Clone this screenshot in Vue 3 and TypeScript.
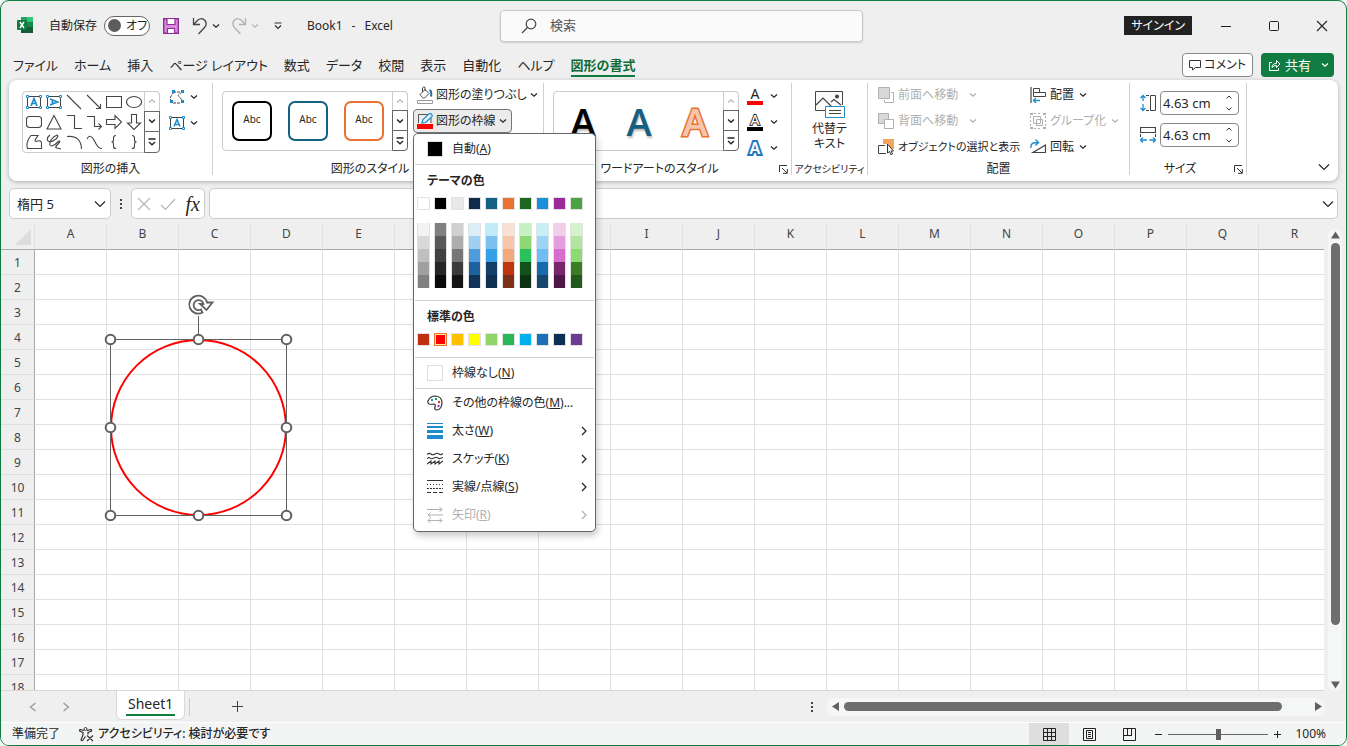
<script setup lang="ts">
import { h, ref } from 'vue'

const Chevron = (props: { wide?: boolean }) =>
  props.wide
    ? h('svg', { width: 12, height: 8, viewBox: '0 0 12 8', class: 'chev' }, [h('path', { d: 'M1 1.5 6 6.5 11 1.5', fill: 'none', stroke: 'currentColor', 'stroke-width': 1.2 })])
    : h('svg', { width: 8, height: 6, viewBox: '0 0 8 6', class: 'chev' }, [h('path', { d: 'M1 1.5 4 4.3 7 1.5', fill: 'none', stroke: 'currentColor', 'stroke-width': 1.2 })])
Chevron.props = { wide: Boolean }

const GalleryScroll = () =>
  h('div', { class: 'gscroll' }, [
    h('button', { class: 'off', 'aria-label': '上へ' }, [h('svg', { width: 8, height: 6, viewBox: '0 0 8 6' }, [h('path', { d: 'M1 4.5 4 1.7 7 4.5', fill: 'none', stroke: '#b5b5b5', 'stroke-width': 1.2 })])]),
    h('button', { 'aria-label': '下へ' }, [h('svg', { width: 8, height: 6, viewBox: '0 0 8 6' }, [h('path', { d: 'M1 1.5 4 4.3 7 1.5', fill: 'none', stroke: '#222', 'stroke-width': 1.4 })])]),
    h('button', { 'aria-label': 'その他' }, [h('svg', { width: 8, height: 8, viewBox: '0 0 8 8' }, [h('path', { d: 'M0.5 1H7.5M1 4 4 6.8 7 4', fill: 'none', stroke: '#222', 'stroke-width': 1.3 })])])
  ])

const Launcher = () =>
  h('button', { class: 'launcher', 'aria-label': '詳細設定' }, [
    h('svg', { width: 9, height: 9, viewBox: '0 0 9 9' }, [h('path', { d: 'M0.5 7V0.5H8M3 3 8 8M8.3 4V8.3H4', fill: 'none', stroke: '#333' })])
  ])

const tabs = ['ファイル', 'ホーム', '挿入', 'ページ レイアウト', '数式', 'データ', '校閲', '表示', '自動化', 'ヘルプ', '図形の書式']
const activeTab = ref('図形の書式')

const shapes: string[] = [
  'M1 1 15 15', 'M1 1 14.5 14.5M14.5 10V14.5H10', 'M.5 2.5H15.5V13.5H.5Z', 'M8 2.5a7.5 5.5 0 1 1 0 11a7.5 5.5 0 1 1 0-11Z',
  'M3.5 2.5H12.5Q15.5 2.5 15.5 5.5V10.5Q15.5 13.5 12.5 13.5H3.5Q.5 13.5 .5 10.5V5.5Q.5 2.5 3.5 2.5Z', 'M8 1.5 15 15H1Z', 'M1 1.5H8.5V14.5H16', 'M1 2.5H8.5V12.5H15M12.5 9.5 15.5 12.5 12.5 15.5', 'M.5 5.5H9V1.5L15.5 8 9 14.5V10.5H.5Z', 'M5.500 .5H10.5V9H14.5L8 15.5 1.5 9H5.500Z',
  'M5 1.5H12L9 6Q9 8 11.500 7Q15 6 15.500 9V14.500H1.500Q-.5 8 5 1.500Z', 'M4 1Q0 4 2 7Q5 9 10 5Q13 2 11 1Q8 2 5 6Q2 12 6 12Q9 11 13 7Q15 7 12 10Q8 14 11 14L15 15', 'M1 2.500Q15 1 15.500 15', 'M1 5Q4-1 8 6Q12 15 16 14.500', 'M10 1.500Q7.500 1.500 7.500 4V6Q7.500 8 5.500 8Q7.500 8 7.500 10V12.500Q7.500 14.500 10 14.500', 'M6 1.500Q8.500 1.500 8.500 4V6Q8.500 8 10.500 8Q8.500 8 8.500 10V12.500Q8.500 14.500 6 14.500'
]

const theme = ['#ffffff', '#000000', '#e8e8e8', '#102a4c', '#156082', '#e97132', '#1c661f', '#1a90d8', '#992b99', '#4ba344']
const shades = [
  ['#f2f2f2', '#d9d9d9', '#bfbfbf', '#a0a0a0', '#808080'],
  ['#808080', '#595959', '#404040', '#262626', '#0a0a0a'],
  ['#d0d0d0', '#aeaeae', '#767676', '#3b3b3b', '#141414'],
  ['#dceef5', '#9fd0f0', '#4f9cdc', '#1d619e', '#123358'],
  ['#c1ebf8', '#7cc0f0', '#35a0e8', '#12406a', '#103050'],
  ['#fbe0d4', '#f6c5ac', '#f2aa7c', '#bf3510', '#7d3018'],
  ['#c8f0c4', '#8cd674', '#2cc05c', '#12501c', '#0c3414'],
  ['#c8eef8', '#9ad4f6', '#70bcf4', '#156aac', '#14466e'],
  ['#f2cfe8', '#e59edd', '#d86dcd', '#78266c', '#501648'],
  ['#d4f2cc', '#b3e5a1', '#8ed973', '#3b7d23', '#205a1c']
]
const standard = ['#c03010', '#ff0000', '#ffc000', '#ffff00', '#90d46c', '#28b858', '#00b0f0', '#1c70b8', '#0f2e54', '#6c3c94']
const picked = ref('#ff0000')

const columns = 'ABCDEFGHIJKLMNOPQR'.split('')
const rows = Array.from({ length: 18 }, (_, i) => i + 1)
const styles = ['black', 'blue', 'orange']

const autosave = ref(false)
const query = ref('')
const cellName = ref('楕円 5')
const formula = ref('')
const shapeHeight = ref('4.63 cm')
const shapeWidth = ref('4.63 cm')
const zoom = ref(100)
</script>

<template>
  <div class="window">
    <header class="titlebar">
      <div class="quick">
        <svg class="logo" width="17" height="17" viewBox="0 0 17 17">
          <path d="M4 0H16V16H4Z" fill="#33c481" /><path d="M4 0H10V6H4Z" fill="#21a366" /><path d="M4 5H16V11H4Z" fill="#178849" /><path d="M4 10H16V16H4Z" fill="#185c37" />
          <rect x="0" y="3" width="10" height="10" rx="1" fill="#107c41" /><path d="M3 5 7 11M7 5 3 11" stroke="#fff" stroke-width="1.5" />
        </svg>
        <label class="autosave">自動保存
          <input v-model="autosave" type="checkbox" role="switch"><span class="switch"><i></i>オフ</span>
        </label>
        <button class="save" aria-label="保存">
          <svg width="16" height="16" viewBox="0 0 16 16"><path d="M.7.700H15.300V15.300H.7Z" fill="#d58ed9" stroke="#922b97" stroke-width="1.400" /><path d="M4 1V6.500H12V1M4.500 15V10.500H11.500V15" fill="#fff" stroke="#922b97" stroke-width="1.200" /></svg>
        </button>
        <button class="undo" aria-label="元に戻す">
          <svg width="16" height="18" viewBox="0 0 16 18"><path d="M1.500 1V7.500H8M1.500 7.500 6 3Q10 0 13 3.500Q15.500 7 12.500 10.500L6.500 17" fill="none" stroke="#444" stroke-width="1.300" /></svg>
          <Chevron />
        </button>
        <button class="undo dim" aria-label="やり直し">
          <svg width="16" height="18" viewBox="0 0 16 18"><path d="M14.500 1V7.500H8M14.500 7.500 10 3Q6 0 3 3.500Q.5 7 3.500 10.500L9.500 17" fill="none" stroke="#b0b0b0" stroke-width="1.300" /></svg>
          <Chevron />
        </button>
        <button class="customize" aria-label="ツール バーのカスタマイズ">
          <svg width="8" height="8" viewBox="0 0 8 8"><path d="M.5 1H7.500M1 3.500 4 6.500 7 3.500" fill="none" stroke="#333" stroke-width="1.200" /></svg>
        </button>
        <div class="doc"><span>Book1</span><span>-</span><span>Excel</span></div>
      </div>
      <label class="search">
        <svg width="16" height="16" viewBox="0 0 16 16"><circle cx="10" cy="6" r="4.800" fill="none" stroke="#444" stroke-width="1.200" /><path d="M6.500 9.500 1 15" stroke="#444" stroke-width="1.200" /></svg>
        <input v-model="query" type="search" placeholder="検索" aria-label="検索">
      </label>
      <div class="winctl">
        <button class="signin">サインイン</button>
        <button class="wc" aria-label="最小化"><svg width="12" height="12" viewBox="0 0 12 12"><path d="M1 6.500H11" stroke="#222" /></svg></button>
        <button class="wc" aria-label="最大化"><svg width="12" height="12" viewBox="0 0 12 12"><rect x="1.500" y="1.500" width="9" height="9" rx="1" fill="none" stroke="#222" /></svg></button>
        <button class="wc" aria-label="閉じる"><svg width="12" height="12" viewBox="0 0 12 12"><path d="M1 1 11 11M11 1 1 11" stroke="#222" stroke-width="1.100" /></svg></button>
      </div>
    </header>

    <nav class="tabs">
      <button v-for="t in tabs" :key="t" :class="['tab', { active: t === activeTab }]" @click="activeTab = t">{{ t }}</button>
      <span class="fill"></span>
      <button class="comment">
        <svg width="12" height="12" viewBox="0 0 12 12"><path d="M.5 1.500H11.500V8.500H6.500L3.500 11V8.500H.5Z" fill="none" stroke="#333" /></svg>コメント
      </button>
      <button class="share">
        <svg width="13" height="13" viewBox="0 0 13 13"><path d="M4 3.500H1.500V11.500H10.500V9M4 8.500Q4 4.500 8.500 4.500V1.500L12 5 8.500 8.500V6.500Q5.500 6.500 4 8.500Z" fill="none" stroke="#fff" /></svg>共有
        <Chevron />
      </button>
    </nav>

    <section class="ribbon">
      <div class="group g-insert">
        <div class="body">
          <div class="gallery shapes-gallery">
            <div class="shapes">
              <svg v-for="n in 2" :key="'t' + n" width="16" height="16" viewBox="0 0 16 16">
                <path d="M1.500 2.500H14.500V13.500H1.500Z" fill="none" stroke="#444" />
                <path d="M5 12 8 4.500 11 12M6 9.500H10" fill="none" stroke="#1e8bcd" stroke-width="1.700" :transform="n === 2 ? 'rotate(90 8 8)' : undefined" />
                <path d="M.5 1.500h2v2h-2zM13.500 1.500h2v2h-2zM.5 12.500h2v2h-2zM13.500 12.500h2v2h-2z" fill="#fff" stroke="#1e8bcd" />
              </svg>
              <svg v-for="(d, i) in shapes" :key="i" width="16" height="16" viewBox="0 0 16 16"><path :d="d" fill="none" stroke="#444" stroke-width="1.100" /></svg>
            </div>
            <GalleryScroll />
          </div>
          <div class="stack">
            <button aria-label="図形の編集">
              <svg width="16" height="16" viewBox="0 0 16 16"><path d="M5 3 1.500 8V13M4 3H13M13 3 9 6.500 14 12M4 14H12" fill="none" stroke="#444" stroke-dasharray="3 1" /><path d="M3 1h3v3h-3zM12 1h3v3h-3zM1 11h3v3h-3zM12 11h3v3h-3z" fill="#1e8bcd" /></svg><Chevron />
            </button>
            <button aria-label="テキスト ボックス">
              <svg width="16" height="16" viewBox="0 0 16 16"><path d="M1.500 2.500H14.500V13.500H1.500Z" fill="none" stroke="#444" /><path d="M5 11.500 8 4.500 11 11.500M6 9.500H10" fill="none" stroke="#1e8bcd" stroke-width="1.500" /><path d="M.5 1.500h2v2h-2zM13.500 1.500h2v2h-2zM.5 12.500h2v2h-2zM13.500 12.500h2v2h-2z" fill="#fff" stroke="#1e8bcd" /></svg><Chevron />
            </button>
          </div>
        </div>
        <div class="caption"><span>図形の挿入</span></div>
      </div>

      <div class="group g-style">
        <div class="body">
          <div class="gallery">
            <div class="cards"><button v-for="s in styles" :key="s" :class="['card', s]">Abc</button></div>
            <GalleryScroll />
          </div>
          <div class="commands">
            <button class="cmd">
              <svg width="16" height="18" viewBox="0 0 16 18"><path d="M3 8.500 8 3.500 12 7.500 7.500 12Q6.500 12.500 5.500 11.500ZM8 5V1.500Q6.500 0 5.500 2V6" fill="none" stroke="#444" /><path d="M12.500 4Q15 5 14 10.500" fill="none" stroke="#1e6fae" stroke-width="2" /><path d="M.5 14.500H15.500V17.500H.5Z" fill="#fff" stroke="#999" /></svg>
              図形の塗りつぶし<Chevron />
            </button>
            <div class="anchor">
              <button class="cmd open" aria-haspopup="menu" aria-expanded="true">
                <svg width="16" height="16" viewBox="0 0 16 16"><path d="M11 1.500H1.500V10M14 5V10" fill="none" stroke="#555" /><path d="M5 10 6 6.500 12 .8Q14 0 15 2Q15.500 3 14.500 4L8.500 9.500Z" fill="#e4f3fb" stroke="#1e8bcd" stroke-width="1.200" /><path d="M0 11H16V16H0Z" fill="#f00" /></svg>
                図形の枠線<Chevron />
              </button>
              <div class="menu" role="menu">
                <button class="item auto" role="menuitem"><span class="box black"></span><span>自動(<u>A</u>)</span></button>
                <hr>
                <h3>テーマの色</h3>
                <div class="swatches"><button v-for="c in theme" :key="c" class="swatch" :aria-label="c" :style="{ background: c }"></button></div>
                <div class="swatches shade-cols">
                  <div v-for="(col, i) in shades" :key="i" class="shade"><button v-for="c in col" :key="c" :aria-label="c" :style="{ background: c }"></button></div>
                </div>
                <hr>
                <h3>標準の色</h3>
                <div class="swatches std"><button v-for="c in standard" :key="c" :class="['swatch', { picked: c === picked }]" :aria-label="c" :style="{ background: c }" @click="picked = c"></button></div>
                <hr>
                <button class="item auto" role="menuitem"><span class="box"></span><span>枠線なし(<u>N</u>)</span></button>
                <hr>
                <button class="item" role="menuitem">
                  <svg width="16" height="16" viewBox="0 0 16 16"><path d="M1 6Q3 1 8.500 1Q15 1.500 15 8Q14.500 14.500 10 15Q7 15 8 12Q9 9 6.500 9Q4 9.500 2 9Q.3 8 1 6Z" fill="none" stroke="#333" stroke-width="1.200" /><circle cx="5" cy="5" r="1.200" fill="#1e8bcd" /><circle cx="9" cy="4" r="1.200" fill="#2a9d50" /><circle cx="12" cy="7" r="1.200" fill="#e33" /><circle cx="11.500" cy="11" r="1.200" fill="#b040b0" /></svg>
                  <span>その他の枠線の色(<u>M</u>)...</span>
                </button>
                <button class="item" role="menuitem">
                  <svg width="16" height="16" viewBox="0 0 16 16"><path d="M0 0H16V1H0ZM0 3H16V5H0ZM0 7H16V10H0ZM0 12H16V16H0Z" fill="#1e8bcd" /></svg>
                  <span>太さ(<u>W</u>)</span><svg class="arrow" width="6" height="10" viewBox="0 0 6 10"><path d="M1 1 5 5 1 9" /></svg>
                </button>
                <button class="item" role="menuitem">
                  <svg width="16" height="16" viewBox="0 0 16 16"><path d="M0 3.500Q2 1.500 4 3T8 3T12 3T16 2.500M0 8Q2 5.500 3 7T7 7T11 7T16 6.500M0 13 4 10 4 13 8 10 8 13 12 10 12 13 16 10" fill="none" stroke="#333" stroke-width="1.100" /></svg>
                  <span>スケッチ(<u>K</u>)</span><svg class="arrow" width="6" height="10" viewBox="0 0 6 10"><path d="M1 1 5 5 1 9" /></svg>
                </button>
                <button class="item" role="menuitem">
                  <svg width="16" height="16" viewBox="0 0 16 16"><path d="M0 1.500H16" stroke="#333" /><path d="M0 5.500H16" stroke="#333" stroke-dasharray="1 2" /><path d="M0 9.500H16" stroke="#333" stroke-dasharray="2 1" /><path d="M0 13.500H16" stroke="#333" stroke-dasharray="4 2" /></svg>
                  <span>実線/点線(<u>S</u>)</span><svg class="arrow" width="6" height="10" viewBox="0 0 6 10"><path d="M1 1 5 5 1 9" /></svg>
                </button>
                <button class="item" role="menuitem" disabled>
                  <svg width="16" height="16" viewBox="0 0 16 16"><path d="M0 2.500H15M12.500 0 15 2.500 12.500 5M1 8H16M3.500 5.500 1 8 3.500 10.500M1 13.500H15M3.500 11 1 13.500 3.500 16M12.500 11 15 13.500 12.500 16" fill="none" stroke="#b0b0b0" /></svg>
                  <span>矢印(<u>R</u>)</span><svg class="arrow" width="6" height="10" viewBox="0 0 6 10"><path d="M1 1 5 5 1 9" /></svg>
                </button>
              </div>
            </div>
          </div>
        </div>
        <div class="caption"><span>図形のスタイル</span></div>
      </div>

      <div class="group g-art">
        <div class="body">
          <div class="gallery">
            <div class="cards"><button v-for="s in styles" :key="s" :class="['art', s]">A</button></div>
            <GalleryScroll />
          </div>
          <div class="stack">
            <button class="letter" aria-label="文字の塗りつぶし"><span class="glyph red">A</span><Chevron /></button>
            <button class="letter" aria-label="文字の輪郭"><span class="glyph line">A</span><Chevron /></button>
            <button class="letter" aria-label="文字の効果"><span class="glyph glow">A</span><Chevron /></button>
          </div>
        </div>
        <div class="caption"><span>ワードアートのスタイル</span><Launcher /></div>
      </div>

      <div class="group g-alt">
        <div class="body">
          <button class="alt">
            <svg width="32" height="28" viewBox="0 0 32 28"><path d="M28.500 15V1.500H1.500V20.500H11" fill="#fafafa" stroke="#444" /><path d="M2 15 9 8 18 17M17 12 20 9.500 27 15" fill="none" stroke="#444" stroke-width="1.200" /><circle cx="23" cy="6.500" r="2" fill="#444" /><path d="M11.500 16.500H30.500V27.500H11.500Z" fill="#fff" stroke="#1e8bcd" /><path d="M15 20.500H27M15 23.500H27" stroke="#444" /></svg>
            <span>代替テ<br>キスト</span>
          </button>
        </div>
        <div class="caption small"><span>アクセシビリティ</span></div>
      </div>

      <div class="group g-arrange">
        <div class="body arrange">
          <button class="cmd gray" disabled><svg width="16" height="16" viewBox="0 0 16 16"><path d="M.5.500H11.500V11.500H.5Z" fill="#d8d8d8" stroke="#b0b0b0" /><path d="M13 5.500H15.500V15.500H6.500V13" fill="none" stroke="#b0b0b0" /></svg><span>前面へ移動</span><Chevron /></button>
          <button class="cmd"><svg width="16" height="16" viewBox="0 0 16 16"><path d="M1 0V16" stroke="#444" stroke-width="1.200" /><path d="M3.500 1.500H9.500V5.500H3.500ZM3.500 5.500H15.500V9.500H3.500Z" fill="none" stroke="#444" /><path d="M3 13.500H10M6 11 3.500 13.500 6 16" fill="none" stroke="#1e8bcd" stroke-width="1.300" /></svg><span>配置</span><Chevron /></button>
          <button class="cmd gray" disabled><svg width="16" height="16" viewBox="0 0 16 16"><path d="M.5.500H10.500V10.500H.5Z" fill="#d8d8d8" stroke="#b0b0b0" /><path d="M6.500 6.500H15.500V15.500H6.500Z" fill="#fff" stroke="#b0b0b0" /></svg><span>背面へ移動</span><Chevron /></button>
          <button class="cmd gray" disabled><svg width="16" height="16" viewBox="0 0 16 16"><path d="M3.500 3.500H10.500V10.500H3.500ZM6.500 6.500H12.500V12.500H6.500Z" fill="none" stroke="#b0b0b0" /><path d="M0 0h3v2h-3zM13 0h3v2h-3zM0 14h3v2h-3zM13 14h3v2h-3z" fill="#b0b0b0" /><path d="M.5 3V13M15.500 3V13M4 .5H12M4 15.500H12" stroke="#b0b0b0" stroke-dasharray="2 2" /></svg><span>グループ化</span><Chevron /></button>
          <button class="cmd long"><svg width="16" height="16" viewBox="0 0 16 16"><path d="M5 0H16V10H5Z" fill="#f2a65c" /><path d="M5 5H11V11H5Z" fill="#fff" /><path d="M7 6.500H.5V14.500H8" fill="none" stroke="#444" /><path d="M9.500 5V14L11.500 12.500 13 16 14.500 15 13 12H15.500Z" fill="#fff" stroke="#333" /></svg><span>オブジェクトの選択と表示</span></button>
          <button class="cmd"><svg width="16" height="16" viewBox="0 0 16 16"><path d="M15.500 6V13.500H3Z" fill="none" stroke="#444" stroke-width="1.200" /><path d="M1 9Q0 3 8 3.500M5.500.500 8.500 3.500 5.500 6.500" fill="none" stroke="#1e8bcd" stroke-width="1.400" /></svg><span>回転</span><Chevron /></button>
        </div>
        <div class="caption"><span>配置</span></div>
      </div>

      <div class="group g-size">
        <div class="body sizes">
          <div class="size">
            <svg width="16" height="18" viewBox="0 0 16 18"><path d="M10.500 1.500H15.500V16.500H10.500Z" fill="none" stroke="#444" /><path d="M6 1.500H9M6 16.500H9" stroke="#444" /><path d="M3 1V7M3 10V17M.5 4 3 1.500 5.500 4M.5 14 3 16.500 5.500 14" fill="none" stroke="#1e8bcd" stroke-width="1.300" /></svg>
            <div class="spin"><input v-model="shapeHeight" aria-label="図形の高さ"><span class="updown"><button aria-label="高さを増やす"><svg width="6" height="4" viewBox="0 0 6 4"><path d="M.5 3.500 3 1 5.500 3.500" /></svg></button><button aria-label="高さを減らす"><svg width="6" height="4" viewBox="0 0 6 4"><path d="M.5.500 3 3 5.500.500" /></svg></button></span></div>
          </div>
          <div class="size">
            <svg width="16" height="18" viewBox="0 0 16 18"><path d="M.5 1.500H15.500V6.500H.5Z" fill="none" stroke="#444" stroke-width="1.200" /><path d="M.5 8V11M15.500 8V11" stroke="#444" /><path d="M.5 14H7M9.500 14H15.500M3 11.500.500 14 3 16.500M13 11.500 15.500 14 13 16.500" fill="none" stroke="#1e8bcd" stroke-width="1.300" /></svg>
            <div class="spin"><input v-model="shapeWidth" aria-label="図形の幅"><span class="updown"><button aria-label="幅を増やす"><svg width="6" height="4" viewBox="0 0 6 4"><path d="M.5 3.500 3 1 5.500 3.500" /></svg></button><button aria-label="幅を減らす"><svg width="6" height="4" viewBox="0 0 6 4"><path d="M.5.500 3 3 5.500.500" /></svg></button></span></div>
          </div>
        </div>
        <div class="caption"><span>サイズ</span><Launcher /></div>
      </div>
      <button class="collapse" aria-label="リボンを折りたたむ"><Chevron wide /></button>
    </section>

    <section class="formula">
      <div class="field name"><input v-model="cellName" aria-label="名前ボックス"><button aria-label="名前の一覧"><Chevron wide /></button></div>
      <span class="dots"><i></i><i></i><i></i></span>
      <div class="field fx">
        <button aria-label="キャンセル"><svg width="14" height="14" viewBox="0 0 14 14"><path d="M1 1 13 13M13 1 1 13" stroke="#b5b5b5" stroke-width="1.200" /></svg></button>
        <button aria-label="入力"><svg width="16" height="14" viewBox="0 0 16 14"><path d="M1 8 5.500 12.500 15 2" fill="none" stroke="#b5b5b5" stroke-width="1.200" /></svg></button>
        <button class="fn" aria-label="関数の挿入">fx</button>
      </div>
      <div class="field expr"><input v-model="formula" aria-label="数式バー"><button aria-label="数式バーの展開"><Chevron wide /></button></div>
    </section>

    <main class="sheet">
      <div class="cells">
        <table>
          <thead><tr><th class="corner"><svg width="16" height="16" viewBox="0 0 16 16"><path d="M16 0V16H0Z" fill="#dcdcdc" /></svg></th><th v-for="c in columns" :key="c" scope="col">{{ c }}</th></tr></thead>
          <tbody><tr v-for="r in rows" :key="r"><th scope="row">{{ r }}</th><td v-for="c in columns" :key="c"></td></tr></tbody>
        </table>
        <svg class="drawing" width="200" height="240" viewBox="0 0 200 240">
          <circle cx="98.500" cy="137.500" r="87.500" fill="none" stroke="#f00" stroke-width="2" />
          <path d="M10.500 49.500H186.500V225.500H10.500ZM98.500 49.500V26" fill="none" stroke="#606060" />
          <g fill="#fff" stroke="#606060" stroke-width="2">
            <circle cx="10.500" cy="49.500" r="4.800" /><circle cx="98.500" cy="49.500" r="4.800" /><circle cx="186.500" cy="49.500" r="4.800" />
            <circle cx="10.500" cy="137.500" r="4.800" /><circle cx="186.500" cy="137.500" r="4.800" />
            <circle cx="10.500" cy="225.500" r="4.800" /><circle cx="98.500" cy="225.500" r="4.800" /><circle cx="186.500" cy="225.500" r="4.800" />
          </g>
          <g fill="none" stroke="#606060" stroke-width="1.800">
            <path d="M102.500 22.500A9 9 0 1 1 107 12.500H112.500L106.500 20 100 14H103.500A5 5 0 1 0 101 19.500Z" fill="#fff" />
          </g>
        </svg>
      </div>
      <div class="vscroll">
        <svg width="9" height="8" viewBox="0 0 9 8"><path d="M4.500.500 9 7.500H0Z" fill="#606060" /></svg>
        <div class="vtrack"><div class="vthumb"></div></div>
        <svg width="9" height="8" viewBox="0 0 9 8"><path d="M0 .5H9L4.500 7.500Z" fill="#606060" /></svg>
      </div>
    </main>

    <section class="sheetbar">
      <button class="nav" aria-label="前のシート"><svg width="8" height="10" viewBox="0 0 8 10"><path d="M6.500 1 1.500 5 6.500 9" /></svg></button>
      <button class="nav" aria-label="次のシート"><svg width="8" height="10" viewBox="0 0 8 10"><path d="M1.500 1 6.500 5 1.500 9" /></svg></button>
      <button class="sheettab"><span>Sheet1</span></button>
      <button class="add" aria-label="新しいシート"><svg width="11" height="11" viewBox="0 0 11 11"><path d="M5.500 0V11M0 5.500H11" stroke="#444" /></svg></button>
      <div class="hzone">
        <span class="dots"><i></i><i></i><i></i></span>
        <div class="hscroll">
          <svg width="7" height="9" viewBox="0 0 7 9"><path d="M7 0V9L0 4.500Z" fill="#606060" /></svg>
          <div class="htrack"><div class="hthumb"></div></div>
          <svg width="7" height="9" viewBox="0 0 7 9"><path d="M0 0V9L7 4.500Z" fill="#606060" /></svg>
        </div>
      </div>
    </section>

    <footer class="status">
      <span class="ready">準備完了</span>
      <button class="access">
        <svg width="15" height="15" viewBox="0 0 15 15"><circle cx="6.500" cy="2" r="1.500" fill="none" stroke="#333" /><path d="M5 3.500 1 2.500Q0 4 1.500 4.500L4 5.500V8L2 13Q3 14.500 4 13L6.500 9.500M8 3.500 12 2.500Q13.500 4 11.500 4.500L9 5.500V7.500M8 8.500 14 14M14 8.500 8 14" fill="none" stroke="#333" stroke-width="1.200" /></svg>
        アクセシビリティ: 検討が必要です
      </button>
      <span class="fill"></span>
      <button class="view on" aria-label="標準"><svg width="13" height="13" viewBox="0 0 13 13"><path d="M.5.500H12.500V12.500H.5ZM4.500 0V13M8.500 0V13M0 4.500H13M0 8.500H13" fill="none" stroke="#222" /></svg></button>
      <button class="view" aria-label="ページ レイアウト表示"><svg width="13" height="13" viewBox="0 0 13 13"><path d="M.5.500H12.500V12.500H.5ZM3.500 2.500H9.500V10.500H3.500ZM5 4.500H8M5 6.500H8M5 8.500H8" fill="none" stroke="#222" /></svg></button>
      <button class="view" aria-label="改ページ プレビュー"><svg width="13" height="13" viewBox="0 0 13 13"><path d="M.5.500H12.500V12.500H.5ZM4.500 0V7.500M8.500 0V7.500M0 7.500H9" fill="none" stroke="#222" /></svg></button>
      <button class="zoombtn" aria-label="縮小"><svg width="9" height="9" viewBox="0 0 9 9"><path d="M1 4.500H8" stroke="#222" /></svg></button>
      <input v-model="zoom" class="zoom" type="range" min="10" max="190" aria-label="ズーム">
      <button class="zoombtn" aria-label="拡大"><svg width="9" height="9" viewBox="0 0 9 9"><path d="M1 4.500H8M4.500 1V8" stroke="#222" /></svg></button>
      <span class="pct">{{ zoom }}%</span>
    </footer>
  </div>
</template>

<style>
body { margin: 0; background: #f4f6f5; }
</style>

<style scoped>
* { box-sizing: border-box; }
.window, .window button, .window input { font-family: "Noto Sans", "Noto Sans CJK JP", sans-serif; font-size: 12px; font-feature-settings: "palt"; color: #262626; }
.window { display: flex; flex-direction: column; height: 100vh; overflow: hidden; border: 1px solid #107c41; border-radius: 9px; background: #efefef; line-height: 16px; }
button { display: flex; align-items: center; padding: 0; border: 0; background: none; white-space: nowrap; line-height: 16px; }
svg { flex: none; display: block; }
input { min-width: 0; padding: 0; border: 0; outline: 0; background: none; }
.fill { flex: 1; }

.titlebar { display: grid; grid-template-columns: 499px 27% 1fr; align-items: center; height: 49px; flex: none; }
.quick { display: flex; align-items: center; padding-left: 16px; }
.autosave { position: relative; display: flex; align-items: center; gap: 7px; margin-left: 15px; white-space: nowrap; }
.autosave input { position: absolute; opacity: 0; }
.switch { display: flex; align-items: center; gap: 5px; width: 46px; height: 20px; padding-left: 3px; border: 1px solid #666; border-radius: 10px; background: #fff; }
.switch i { width: 13px; height: 13px; flex: none; border-radius: 50%; background: #5c5c5c; }
.save { margin-left: 13px; }
.undo { gap: 4px; margin-left: 13px; }
.undo + .undo { margin-left: 11px; }
.window .dim { color: #b5b5b5; }
.customize { margin-left: 15px; }
.doc { display: flex; gap: 9px; margin-left: 25px; }
.search { display: flex; align-items: center; gap: 13px; height: 32px; padding-left: 20px; border: 1px solid #c8c8c8; border-radius: 4px; background: #fafafa; box-shadow: 0 1px 2px #0002; }
.search input { flex: 1; }
.search input::placeholder { color: #555; opacity: 1; font-size: 13px; }
.winctl { display: flex; align-items: center; justify-content: flex-end; }
.window .signin { height: 19px; padding: 0 7px; margin-right: 10px; background: #222; color: #fff; }
.wc { width: 48px; height: 32px; justify-content: center; }

.tabs { display: flex; align-items: center; height: 30px; flex: none; padding: 0 12px; }
.window .tab { height: 24px; margin-right: 16px; border-top: 2px solid transparent; border-bottom: 2px solid transparent; font-size: 13px; }
.window .tab.active { border-bottom-color: #107c41; color: #0e6b38; font-weight: 700; }
.comment { gap: 3px; height: 24px; padding: 0 6px; border: 1px solid #888; border-radius: 4px; background: #fff; }
.window .share { gap: 4px; height: 24px; margin-left: 8px; padding: 0 5px 0 7px; border-radius: 4px; background: #107c41; color: #fff; font-size: 13px; }
.share .chev { margin-left: 6px; }

.ribbon { position: relative; z-index: 2; display: flex; flex: none; height: 101px; margin: 0 8px; padding: 3px 0 6px; border-radius: 8px; background: #fff; box-shadow: 0 1px 4px #0004; }
.group { display: flex; flex-direction: column; flex: none; border-right: 1px solid #d0d0d0; }
.body { display: flex; flex: 1; min-height: 0; }
.caption { position: relative; display: flex; justify-content: center; height: 12px; line-height: 12px; white-space: nowrap; }
.caption.small { font-size: 10px; }
.launcher { position: absolute; right: 3px; top: 2px; display: flex; }
.g-insert { width: 204px; }
.g-style { width: 331px; }
.g-art { width: 248px; }
.g-alt { width: 76px; }
.g-arrange { width: 262px; }
.g-size { width: 117px; }
.g-style .caption, .g-art .caption, .g-size .caption { padding-right: 16px; }
.gallery { display: flex; width: 186px; height: 60px; margin: 8px 0 0 9px; border: 1px solid #ccc; border-radius: 4px; background: #fff; }
.shapes-gallery { width: 138px; height: 62px; margin-left: 13px; }
.shapes { display: grid; flex: 1; grid-template-columns: repeat(6, 20px); grid-template-rows: repeat(3, 20px); place-items: center; padding-left: 1px; }
.cards { display: flex; flex: 1; align-items: center; gap: 16px; padding-left: 9px; }
.window .card { justify-content: center; width: 40px; height: 40px; padding-bottom: 4px; border: 2px solid #000; border-radius: 7px; background: #fff; font-size: 10px; }
.window .card.blue { border-color: #156082; }
.window .card.orange { border-color: #e97132; }
.window .art { justify-content: center; width: 40px; height: 40px; font-family: "Open Sans", sans-serif; font-size: 38px; font-weight: 600; line-height: 40px; text-shadow: 1px 2px 2px #0004; color: #000; }
.window .art.blue { color: #156082; }
.window .art.orange { color: #f6c5ac; -webkit-text-stroke: 3px #e97132; paint-order: stroke fill; text-shadow: none; }
.gscroll { width: 16px; margin: -1px -1px -1px auto; display: grid; grid-template-rows: repeat(3, 1fr); }
.gscroll :deep(button) { display: flex; align-items: center; justify-content: center; padding: 0; border: 1px solid #666; margin-top: -1px; background: #fff; }
.gscroll :deep(button:first-child) { border-color: #ccc; border-radius: 0 4px 0 0; margin-top: 0; }
.gscroll :deep(button:last-child) { border-radius: 0 0 4px 0; }
.stack { display: flex; flex-direction: column; padding-left: 9px; }
.g-insert .stack { padding-top: 1px; }
.stack button { gap: 5px; height: 26px; }
.g-art .stack { padding-left: 8px; }
.stack .letter { gap: 7px; }
.glyph { display: block; width: 16px; height: 18px; line-height: 14px; text-align: center; font-size: 14px; }
.glyph.red { border-bottom: 4px solid #f00; }
.glyph.line { border-bottom: 4px solid #000; color: #fff; -webkit-text-stroke: 2px #333; paint-order: stroke fill; }
.glyph.glow { color: #fff; font-size: 16px; line-height: 18px; font-weight: 600; -webkit-text-stroke: 4px #1e78c0; paint-order: stroke fill; }
.commands { padding-left: 5px; }
.cmd { gap: 4px; height: 24px; }
.commands .cmd { gap: 3px; }
.cmd .chev { margin-left: 1px; }
.commands .chev { margin-left: 0; }
.commands > .cmd { margin-left: 4px; }
.anchor { position: relative; margin-top: 2px; }
.cmd.open { padding: 0 4px 0 3px; border: 1px solid #777; border-radius: 4px; background: #ebebeb; }
.menu { position: absolute; top: 24px; left: 0; width: 183px; padding: 0 1px 2px; border: 1px solid #666; border-radius: 5px; background: #fff; box-shadow: 2px 4px 6px #0003; }
.menu hr { height: 1px; margin: 0; border: 0; background: #d0d0d0; }
.menu h3 { margin: 0; padding-left: 12px; font-size: 12px; line-height: 32px; }
.item { gap: 9px; width: 100%; height: 28px; padding: 0 7px 0 12px; }
.item.auto { height: 30px; }
.item:disabled, .item:disabled span { color: #b0b0b0; }
.box { width: 16px; height: 16px; border: 1px solid #ddd; background: #fff; }
.box.black { background: #000; }
.arrow { margin-left: auto; fill: none; stroke: #222; stroke-width: 1.2; }
.item:disabled .arrow { stroke: #b0b0b0; }
.swatches { display: flex; gap: 4px; padding-left: 2px; }
.swatch { width: 13px; height: 13px; border: 1px solid #e2e2e2; }
.swatch.picked { border: 1px solid #e8762d; box-shadow: inset 0 0 0 1px #ffe6a0; }
.shade-cols { padding-top: 13px; padding-bottom: 12px; }
.shade { width: 13px; border: 1px solid #e2e2e2; border-width: 0 1px; }
.shade button { width: 11px; height: 13px; }
.std { padding-bottom: 11px; }
.alt { flex-direction: column; flex: 1; justify-content: flex-start; gap: 3px; padding-top: 7px; text-align: center; line-height: 15px; }
.arrange { display: grid; grid-template-columns: 152px auto; grid-template-rows: repeat(3, 24px); row-gap: 2px; justify-content: start; padding-left: 10px; align-items: center; }
.arrange .gray:nth-child(4n + 1) .chev, .arrange .gray:nth-child(3) .chev { margin-left: 7px; }
.window .gray { color: #b0b0b0; }
.window .long { font-size: 11px; }
.sizes { flex-direction: column; gap: 8px; padding: 8px 0 0 10px; }
.size { display: flex; align-items: center; gap: 4px; height: 24px; }
.spin { display: flex; align-items: center; width: 79px; height: 24px; padding: 0 6px 0 2px; border: 1px solid #888; border-radius: 4px; background: #fff; }
.window .spin input { flex: 1; width: 50px; font-size: 13px; }
.updown { display: grid; gap: 8px; }
.updown path { fill: none; stroke: #333; }
.collapse { align-self: flex-end; margin: 0 8px 4px auto; }

.formula { display: flex; flex: none; gap: 4px; height: 31px; margin: 7px 8px 0; }
.field { display: flex; align-items: center; border: 1px solid #ccc; border-radius: 5px; background: #fff; }
.window .field input { flex: 1; font-size: 13px; }
.name { width: 102px; padding: 0 4px 0 7px; }
.dots { display: flex; flex-direction: column; justify-content: center; gap: 2px; width: 12px; align-items: center; }
.dots i { width: 2px; height: 2px; background: #444; }
.fx { justify-content: space-between; width: 74px; padding: 0 4px 0 5px; }
.window .fn { font-family: "Liberation Serif", serif; font-style: italic; font-size: 20px; }
.expr { flex: 1; padding: 0 3px 0 8px; }

.sheet { display: flex; flex: 1; min-height: 0; margin-top: 5px; }
.cells { position: relative; flex: 1; overflow: hidden; background: linear-gradient(#efefef 25px, #fff 25px); border-bottom: 1px solid #d8d8d8; }
table { width: 1330px; border-collapse: separate; border-spacing: 0; table-layout: fixed; background: #fff; }
th, td { width: 72px; height: 25px; padding: 0; border-right: 1px solid #e0e0e0; border-bottom: 1px solid #e0e0e0; }
th { background: #efefef; color: #444; font-weight: 400; line-height: 16px; }
tbody th { padding-top: 2px; }
thead th { height: 26px; padding-bottom: 6px; border-bottom-color: #a8a8a8; }
tbody th, .corner { width: 34px; border-right-color: #a8a8a8; }
thead .corner { width: 34px; padding: 0 3px 0 14px; border-right-color: #e0e0e0; }
.drawing { position: absolute; left: 99px; top: 66px; }
.vscroll { display: flex; flex-direction: column; align-items: center; gap: 4px; width: 14px; margin: 5px 4px 0 4px; padding: 2px 0; border-radius: 7px; background: #f5f7f6; }
.vtrack { flex: 1; width: 9px; }
.vthumb { height: 88%; border-radius: 5px; background: #6e6e6e; }

.sheetbar { display: flex; flex: none; align-items: center; height: 31px; }
.nav { width: 33px; justify-content: center; }
.nav:first-child { margin-left: 15px; }
.nav path { fill: none; stroke: #999; stroke-width: 1.3; }
.sheettab { align-self: flex-start; height: 29px; margin-left: 34px; padding: 0 9px; border: 1px solid #d8d8d8; border-top: 0; border-radius: 0 0 6px 6px; background: #fff; }
.sheettab span { padding: 1px 2px; border-bottom: 2px solid #107c41; font-size: 14px; line-height: 18px; }
.add { height: 18px; margin-left: 4px; padding-left: 42px; border-left: 1px solid #ccc; }
.hzone { display: flex; align-items: center; width: 519px; margin: 0 21px 0 auto; gap: 8px; }
.hscroll { display: flex; align-items: center; gap: 5px; flex: 1; height: 18px; padding: 0 3px 0 6px; border-radius: 9px; background: #f5f7f6; }
.htrack { flex: 1; }
.hthumb { width: 94%; height: 9px; border-radius: 5px; background: #6e6e6e; }

.status { display: flex; flex: none; align-items: center; height: 23px; padding-left: 11px; border-top: 1px solid #fff; background: #f3f5f4; }
.window .access { gap: 4px; margin-left: 19px; font-weight: 500; }
.view { width: 40px; height: 22px; justify-content: center; }
.view.on { background: #dedede; }
.zoombtn { margin-left: 5px; }
.zoom { width: 100px; height: 12px; margin: 0 0 0 5px; appearance: none; background: linear-gradient(#666, #666) center / 100% 1px no-repeat; }
.zoom::-webkit-slider-thumb { appearance: none; width: 5px; height: 11px; background: #606060; }
.pct { margin: 0 20px 0 13px; }
</style>
